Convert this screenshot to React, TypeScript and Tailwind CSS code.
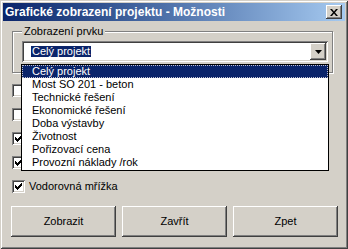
import React from 'react';

const items = [
  'Celý projekt',
  'Most SO 201 - beton',
  'Technické řešení',
  'Ekonomické řešení',
  'Doba výstavby',
  'Životnost',
  'Pořizovací cena',
  'Provozní náklady /rok',
];

// classic 3d bevels
const raised =
  'shadow-[inset_-1px_-1px_0_#404040,inset_1px_1px_0_#fff,inset_-2px_-2px_0_#808080,inset_2px_2px_0_#d4d0c8]';
const sunken =
  'shadow-[inset_1px_1px_0_#808080,inset_-1px_-1px_0_#fff,inset_2px_2px_0_#404040,inset_-2px_-2px_0_#d4d0c8]';

const CheckMark = () => (
  <svg width="13" height="13" viewBox="0 0 13 13" className="absolute left-0 top-0">
    <path
      d="M3 5h1v3H3zM4 6h1v3H4zM5 7h1v3H5zM6 6h1v3H6zM7 5h1v3H7zM8 4h1v3H8zM9 3h1v3H9z"
      fill="#000"
    />
  </svg>
);

const Checkbox: React.FC<{ checked?: boolean; label?: string }> = ({ checked, label }) => (
  <div className="flex items-center h-[13px]">
    <div className={`relative w-[13px] h-[13px] bg-white ${sunken}`}>{checked && <CheckMark />}</div>
    {label && <span className="ml-[4px] text-[11px] leading-[13px] text-black">{label}</span>}
  </div>
);

const Button: React.FC<{ label: string }> = ({ label }) => (
  <div
    className={`w-[105px] h-[31px] bg-[#d4d0c8] flex items-center justify-center text-[11px] text-black ${raised}`}
  >
    {label}
  </div>
);

export default function App() {
  return (
    <div className="w-[348px] h-[249px] bg-[#d4d0c8] p-[3px] flex flex-col font-['Liberation_Sans',Arial,sans-serif] shadow-[inset_1px_1px_0_#d4d0c8,inset_-1px_-1px_0_#404040,inset_2px_2px_0_#fff,inset_-2px_-2px_0_#808080]">
      {/* title bar */}
      <div className="h-[18px] flex items-center justify-between bg-gradient-to-r from-[#0a246a] to-[#a6caf0] pl-[2px] pr-[3px]">
        <span className="text-white font-bold text-[12px] leading-none">
          Grafické zobrazení projektu - Možnosti
        </span>
        <div className={`w-[16px] h-[14px] bg-[#d4d0c8] flex items-center justify-center ${raised}`}>
          <svg width="8" height="7" viewBox="0 0 8 7">
            <path d="M0 0h2l2 2.5L6 0h2L5 3.5 8 7H6L4 4.5 2 7H0l3-3.5z" fill="#000" />
          </svg>
        </div>
      </div>

      <div className="relative flex-1 flex flex-col">
        {/* group box */}
        <div className="relative mt-[10px] ml-[9px] w-[321px] h-[42px] border border-[#808080] shadow-[inset_1px_1px_0_#fff,1px_1px_0_#fff]">
          <span className="absolute -top-[7px] left-[9px] px-[2px] bg-[#d4d0c8] text-[11px] leading-[13px] text-black">
            Zobrazení prvku
          </span>
          <div className={`mt-[9px] ml-[9px] w-[306px] h-[21px] bg-white flex items-center p-[2px] ${sunken}`}>
            <div className="flex-1 pl-[7px] flex items-center">
              <span className="bg-[#0a246a] text-white text-[11px] leading-[11px] px-[1px]">Celý projekt</span>
            </div>
            <div className={`w-[16px] h-[17px] bg-[#d4d0c8] flex items-center justify-center ${raised}`}>
              <svg width="7" height="4" viewBox="0 0 7 4">
                <path d="M0 0h7L3.5 4z" fill="#000" />
              </svg>
            </div>
          </div>
        </div>

        {/* checkboxes */}
        <div className="mt-[11px] ml-[9px] flex flex-col gap-[11px]">
          <Checkbox />
          <Checkbox />
          <Checkbox checked />
          <Checkbox checked />
          <Checkbox checked label="Vodorovná mřížka" />
        </div>

        {/* buttons */}
        <div className="mt-[13px] ml-[8px] flex gap-[6px]">
          <Button label="Zobrazit" />
          <Button label="Zavřít" />
          <Button label="Zpet" />
        </div>

        {/* open dropdown list */}
        <div className="absolute left-[18px] top-[43px] w-[308px] h-[107px] bg-white border border-black flex flex-col">
          {items.map((it, i) => (
            <div
              key={it}
              className={`h-[13px] pl-[10px] text-[11px] leading-[13px] ${
                i === 0
                  ? 'bg-[#0a246a] text-white outline-1 outline-dotted outline-[#c0c0d0] -outline-offset-1'
                  : 'text-black'
              }`}
            >
              {it}
            </div>
          ))}
        </div>
      </div>
    </div>
  );
}
